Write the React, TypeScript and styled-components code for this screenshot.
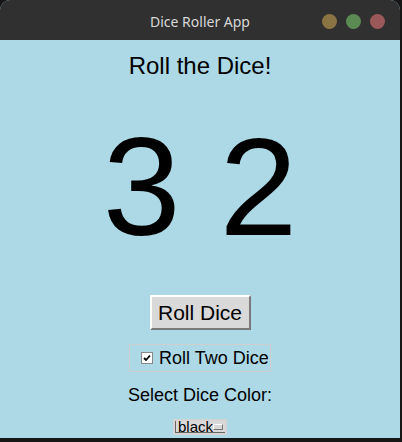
import React, { useState } from "react";
import styled, { createGlobalStyle } from "styled-components";

const GlobalStyle = createGlobalStyle`
  html, body {
    margin: 0;
    padding: 0;
    background: #161616;
  }
`;

export default function App() {
  const [dice, setDice] = useState<number[]>([3, 2]);
  const [twoDice, setTwoDice] = useState(true);
  const [color, setColor] = useState("black");

  const roll = () => {
    const count = twoDice ? 2 : 1;
    const next: number[] = [];
    for (let i = 0; i < count; i++) next.push(Math.floor(Math.random() * 6) + 1);
    setDice(next);
  };

  return (
    <>
      <GlobalStyle />
      <Window>
        <TitleBar>
          <TitleText>Dice Roller App</TitleText>
          <Controls>
            <Dot color="#8a7444" />
            <Dot color="#5b8a52" />
            <Dot color="#9a5858" />
          </Controls>
        </TitleBar>
        <Content>
          <Heading>Roll the Dice!</Heading>
          <DiceText style={{ color }}>{dice.join(" ")}</DiceText>
          <RollButton onClick={roll}>Roll Dice</RollButton>
          <CheckFrame onClick={() => setTwoDice(!twoDice)}>
            <CheckBox>{twoDice && <CheckMark viewBox="0 0 8 8"><path d="M1 4 L3 6 L7 1.5" /></CheckMark>}</CheckBox>
            <CheckLabel>Roll Two Dice</CheckLabel>
          </CheckFrame>
          <ColorLabel>Select Dice Color:</ColorLabel>
          <OptionMenu onClick={() => setColor(color === "black" ? "red" : "black")}>
            <OptionInner>
              <OptionText>black</OptionText>
              <Indicator />
            </OptionInner>
          </OptionMenu>
        </Content>
      </Window>
    </>
  );
}

const Window = styled.div`
  width: 400px;
  height: 438px;
  display: flex;
  flex-direction: column;
  border-radius: 10px 10px 0 0;
  overflow: hidden;
  background: #add8e6;
`;

const TitleBar = styled.div`
  height: 40px;
  flex-shrink: 0;
  background: #303030;
  position: relative;
  display: flex;
  align-items: center;
  justify-content: center;
`;

const TitleText = styled.span`
  font-family: "Noto Sans", "DejaVu Sans", sans-serif;
  font-size: 14px;
  color: #d8d8d8;
  margin-top: 2px;
`;

const Controls = styled.div`
  position: absolute;
  right: 15px;
  top: 14px;
  display: flex;
  gap: 9px;
`;

const Dot = styled.span<{ color: string }>`
  width: 15px;
  height: 15px;
  border-radius: 50%;
  background: ${(p) => p.color};
`;

const Content = styled.div`
  flex: 1;
  display: flex;
  flex-direction: column;
  align-items: center;
  font-family: "Liberation Sans", Arial, sans-serif;
  color: #000;
`;

const Heading = styled.div`
  font-size: 24px;
  line-height: 28px;
  margin-top: 12px;
`;

const DiceText = styled.div`
  font-size: 140px;
  line-height: 160px;
  margin-top: 27px;
  white-space: pre;
`;

const RollButton = styled.button`
  font-family: "Liberation Sans", Arial, sans-serif;
  font-size: 21px;
  width: 101px;
  height: 35px;
  padding: 0;
  margin-top: 28px;
  background: #d9d9d9;
  border: 2px solid;
  border-color: #ffffff #7a7a7a #7a7a7a #ffffff;
  border-radius: 0;
  color: #000;
  cursor: pointer;
`;

const CheckFrame = styled.div`
  margin-top: 14px;
  width: 142px;
  height: 28px;
  box-sizing: border-box;
  border: 1px solid #cfcfcf;
  display: flex;
  align-items: center;
  gap: 6px;
  padding-left: 11px;
  cursor: pointer;
`;

const CheckBox = styled.span`
  width: 10px;
  height: 10px;
  background: #fff;
  border: 1px solid #888;
  display: flex;
  align-items: center;
  justify-content: center;
  flex-shrink: 0;
`;

const CheckMark = styled.svg`
  width: 8px;
  height: 8px;
  fill: none;
  stroke: #000;
  stroke-width: 1.8;
`;

const CheckLabel = styled.span`
  font-size: 18px;
  line-height: 20px;
`;

const ColorLabel = styled.div`
  font-size: 18px;
  line-height: 22px;
  margin-top: 12px;
`;

const OptionMenu = styled.div`
  margin-top: 13px;
  width: 54px;
  height: 16px;
  box-sizing: border-box;
  background: #d4d4d4;
  padding: 2px;
  cursor: pointer;
`;

const OptionInner = styled.div`
  height: 100%;
  box-sizing: border-box;
  background: #d9d9d9;
  border-left: 1px solid #666;
  border-bottom: 1px solid #666;
  display: flex;
  align-items: center;
  justify-content: space-between;
  padding: 0 2px 0 2px;
`;

const OptionText = styled.span`
  font-size: 15px;
  line-height: 12px;
`;

const Indicator = styled.span`
  width: 9px;
  height: 4px;
  background: #d9d9d9;
  border: 1px solid;
  border-color: #fff #777 #777 #fff;
`;
